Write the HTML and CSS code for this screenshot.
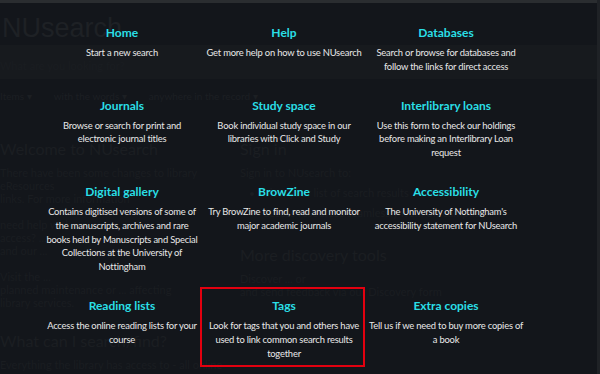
FILE: index.html
```html
<!DOCTYPE html>
<html lang="en">
<head>
  <meta charset="UTF-8" />
  <title>NUsearch - More discovery tools</title>
  <link rel="stylesheet" href="styles.css">
</head>
<body>

<!-- faded page behind the menu -->
<div class="page">
  <div class="topline"></div>
  <div class="brand">NUsearch</div>
  <div class="search-band">
    <span class="placeholder">What are you looking for?</span>
  </div>
  <div class="filters">
    <span>Items ▾</span>
    <span>with the words ▾</span>
    <span>anywhere in the record ▾</span>
  </div>
  <div class="columns">
    <div class="col-main">
      <h2>Welcome to NUsearch</h2>
      <p>There have been some changes to library eResources<br>
      links. For more information<br>
      <br>
      need help with<br>
      access? ...<br>
      and our ...<br>
      <br>
      Visit the ...<br>
      planned maintenance or ... affecting<br>
      library services.</p>
      <h2 class="low">What can I search/find?</h2>
      <p>Everything the library has access to - all online</p>
    </div>
    <div class="col-side">
      <h2>Sign in</h2>
      <p>Sign in to NUsearch to:</p>
      <ul>
        <li>view your list of search results</li>
        <li>access resources seamlessly from off campus</li>
      </ul>
      <h2 class="low">More discovery tools</h2>
      <p>Discover ... or<br>and send feedback via our Discovery form</p>
    </div>
  </div>
</div>

<!-- menu overlay -->
<div class="menu">
  <div class="tile">
    <div class="title">Home</div>
    <div class="desc">Start a new search</div>
  </div>
  <div class="tile">
    <div class="title">Help</div>
    <div class="desc">Get more help on how to use NUsearch</div>
  </div>
  <div class="tile">
    <div class="title">Databases</div>
    <div class="desc">Search or browse for databases and follow the links for direct access</div>
  </div>

  <div class="tile">
    <div class="title">Journals</div>
    <div class="desc">Browse or search for print and electronic journal titles</div>
  </div>
  <div class="tile">
    <div class="title">Study space</div>
    <div class="desc">Book individual study space in our libraries with Click and Study</div>
  </div>
  <div class="tile">
    <div class="title">Interlibrary loans</div>
    <div class="desc">Use this form to check our holdings before making an Interlibrary Loan request</div>
  </div>

  <div class="tile">
    <div class="title">Digital gallery</div>
    <div class="desc">Contains digitised versions of some of the manuscripts, archives and rare books held by Manuscripts and Special Collections at the University of Nottingham</div>
  </div>
  <div class="tile">
    <div class="title">BrowZine</div>
    <div class="desc">Try BrowZine to find, read and monitor major academic journals</div>
  </div>
  <div class="tile">
    <div class="title">Accessibility</div>
    <div class="desc">The University of Nottingham's accessibility statement for NUsearch</div>
  </div>

  <div class="tile">
    <div class="title">Reading lists</div>
    <div class="desc">Access the online reading lists for your course</div>
  </div>
  <div class="tile highlight">
    <div class="title">Tags</div>
    <div class="desc">Look for tags that you and others have used to link common search results together</div>
  </div>
  <div class="tile">
    <div class="title">Extra copies</div>
    <div class="desc">Tell us if we need to buy more copies of a book</div>
  </div>
</div>

</body>
</html>
```

FILE: styles.css
```css
* {
  box-sizing: border-box;
}

html, body {
  height: 100%;
}

body {
  margin: 0;
  background-color: #13161b;
  font-family: 'Lato', 'Open Sans', sans-serif;
  overflow: hidden;
  position: relative;
  border-right: 3px solid #1f2226;
}

/* Faded page behind */
.page {
  color: #1a1d21;
}

.topline {
  height: 3px;
  background: #2a2d30;
}

.brand {
  font-family: 'Liberation Sans', sans-serif;
  font-size: 27px;
  line-height: 34px;
  padding-left: 2px;
  margin-top: 8px;
  color: #1e2125;
}

.search-band {
  height: 34px;
  background: #171a1e;
  display: flex;
  align-items: center;
  font-size: 11px;
}

.search-band .placeholder {
  padding-top: 6px;
}

.filters {
  display: flex;
  gap: 22px;
  font-size: 10px;
  padding-top: 11px;
  height: 36px;
  color: #1c1f23;
}

.columns {
  display: flex;
  padding-top: 24px;
}

.col-main {
  width: 240px;
}

.col-side {
  flex: 1;
}

.page h2 {
  font-weight: 400;
  font-size: 16px;
  margin: 0 0 8px;
  color: #1b1e22;
}

.page h2.low {
  margin-top: 22px;
}

.page p {
  font-size: 11px;
  line-height: 13px;
  margin: 0;
}

.page ul {
  font-size: 11px;
  line-height: 20px;
  margin: 4px 0 0;
  padding-left: 24px;
}

/* Menu overlay */
.menu {
  position: absolute;
  top: 13px;
  left: 41px;
  display: grid;
  grid-template-columns: repeat(3, 162px);
}

.tile {
  position: relative;
  padding: 12px 2px;
  text-align: center;
}

.title {
  font-weight: 700;
  font-size: 12px;
  line-height: 16px;
  color: #2adfe6;
  margin-bottom: 5px;
}

.desc {
  font-size: 9.4px;
  letter-spacing: -0.2px;
  line-height: 13.8px;
  color: #e8e8e8;
}

.highlight::after {
  content: "";
  position: absolute;
  top: 1px;
  bottom: 5px;
  left: -3px;
  right: 0;
  border: 2px solid #e3000f;
}
```
